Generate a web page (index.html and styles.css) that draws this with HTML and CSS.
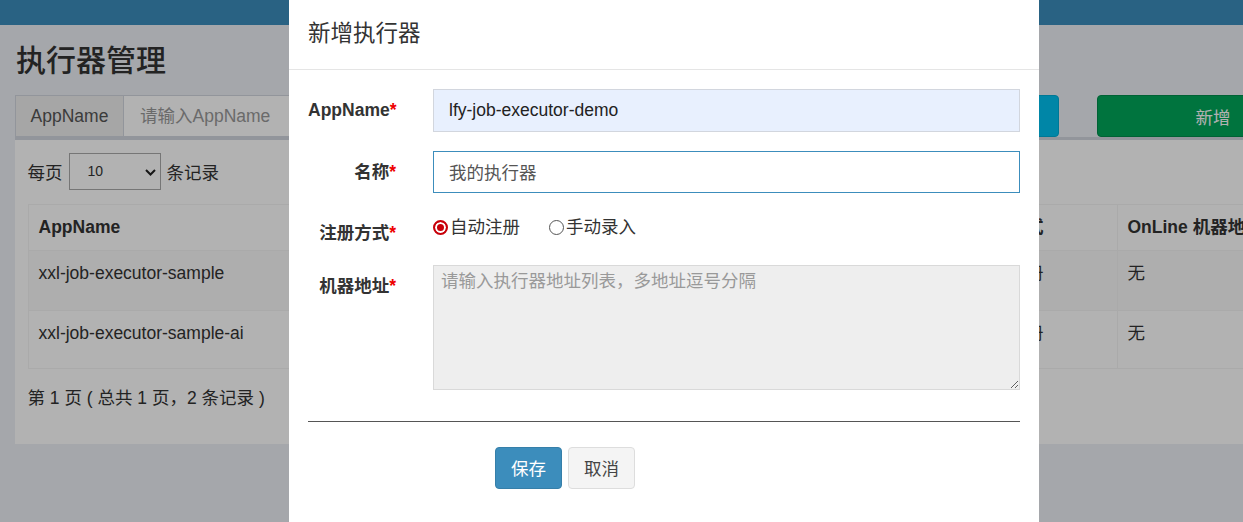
FILE: index.html
```html
<!DOCTYPE html>
<html lang="zh">
<head>
    <meta charset="UTF-8">
    <meta name="viewport" content="width=device-width, initial-scale=1.0">
    <title>执行器管理</title>
    <link rel="stylesheet" href="styles.css">
</head>
<body>
    <div class="page">
        <div class="topbar"></div>
        <div class="content">
            <h1>执行器管理</h1>

            <div class="toolbar">
                <div class="search">
                    <span class="addon">AppName</span>
                    <input type="text" placeholder="请输入AppName">
                </div>
                <button class="btn-search">搜索</button>
                <button class="btn-add">新增</button>
            </div>

            <div class="box">
                <div class="length">
                    每页
                    <span class="select-wrap">
                        <select><option>10</option></select>
                        <svg class="chevron" width="11" height="7" viewBox="0 0 11 7"><path d="M1 1l4.5 4.5L10 1" fill="none" stroke="#222" stroke-width="2"/></svg>
                    </span>
                    条记录
                </div>

                <table>
                    <colgroup>
                        <col style="width: 470px">
                        <col style="width: 465px">
                        <col style="width: 154px">
                        <col style="width: 260px">
                        <col>
                    </colgroup>
                    <thead>
                        <tr>
                            <th>AppName</th>
                            <th>名称</th>
                            <th>注册方式</th>
                            <th>OnLine 机器地址</th>
                            <th>操作</th>
                        </tr>
                    </thead>
                    <tbody>
                        <tr>
                            <td>xxl-job-executor-sample</td>
                            <td>示例执行器</td>
                            <td>自动注册</td>
                            <td>无</td>
                            <td>操作</td>
                        </tr>
                        <tr>
                            <td>xxl-job-executor-sample-ai</td>
                            <td>AI执行器Sample</td>
                            <td>自动注册</td>
                            <td>无</td>
                            <td>操作</td>
                        </tr>
                    </tbody>
                </table>

                <div class="info">第 1 页 ( 总共 1 页，2 条记录 )</div>
            </div>
        </div>
    </div>

    <div class="backdrop"></div>

    <div class="modal">
        <div class="modal-header">
            <h4>新增执行器</h4>
        </div>
        <div class="modal-body">
            <form>
                <div class="form-row">
                    <label>AppName<span class="req">*</span></label>
                    <input class="field autofill" type="text" value="lfy-job-executor-demo">
                </div>
                <div class="form-row">
                    <label>名称<span class="req">*</span></label>
                    <input class="field focused" type="text" value="我的执行器">
                </div>
                <div class="form-row">
                    <label>注册方式<span class="req">*</span></label>
                    <div class="radios">
                        <label class="radio"><input type="radio" name="addressType" checked>自动注册</label>
                        <label class="radio"><input type="radio" name="addressType">手动录入</label>
                    </div>
                </div>
                <div class="form-row">
                    <label>机器地址<span class="req">*</span></label>
                    <textarea class="area" readonly placeholder="请输入执行器地址列表，多地址逗号分隔"></textarea>
                </div>
                <hr>
                <div class="actions">
                    <button type="button" class="btn btn-primary">保存</button>
                    <button type="button" class="btn btn-default">取消</button>
                </div>
            </form>
        </div>
    </div>
</body>
</html>
```

FILE: styles.css
```css
body {
    margin: 0;
    font-family: "Liberation Sans", Arial, "Noto Sans CJK SC", sans-serif;
    font-size: 17.5px;
    color: #333;
    background-color: #ecf0f5;
    overflow: hidden;
}
.page {
    width: 1600px;
}
.topbar {
    height: 25px;
    background-color: #3c8dbc;
}
.content {
    padding: 0 15px;
}
h1 {
    margin: 0;
    padding: 19px 0 0 1px;
    font-size: 30px;
    line-height: 33px;
    font-weight: 500;
}
.toolbar {
    display: flex;
    margin-top: 18px;
    height: 42px;
}
.search {
    display: flex;
    width: 420px;
}
.addon {
    width: 109px;
    box-sizing: border-box;
    border: 1px solid #d2d6de;
    background-color: #eee;
    color: #555;
    text-align: center;
    line-height: 40px;
}
.search input {
    flex: 1;
    border: 1px solid #d2d6de;
    border-left: none;
    padding: 0 16px;
    font-family: inherit;
    font-size: 17.5px;
}
.search input::placeholder {
    color: #999;
}
.btn-search {
    width: 130px;
    margin-left: 494px;
    border: 1px solid #00acd6;
    border-radius: 4px;
    background-color: #00c0ef;
    color: #fff;
    font-family: inherit;
    font-size: 17.5px;
}
.btn-add {
    width: 232px;
    margin-left: 38px;
    border: 1px solid #008d4c;
    border-radius: 4px;
    background-color: #00a65a;
    color: #fff;
    font-family: inherit;
    font-size: 17.5px;
}
.box {
    border-top: 3px solid #d2d6de;
    background-color: #fff;
    padding: 12.5px 12.5px 33px;
}
.length {
    display: flex;
    align-items: center;
    gap: 6px;
    height: 37px;
}
.select-wrap {
    position: relative;
    display: inline-block;
}
.select-wrap select {
    -webkit-appearance: none;
    appearance: none;
    width: 92px;
    height: 37px;
    border: 1px solid #aaa;
    background-color: #fff;
    padding-left: 18px;
    font-family: inherit;
    font-size: 14px;
    color: #333;
}
.chevron {
    position: absolute;
    right: 5px;
    top: 16px;
}
table {
    width: 100%;
    margin-top: 14px;
    border-collapse: collapse;
    table-layout: fixed;
    border: 1px solid #f4f4f4;
}
th, td {
    padding: 10px;
    text-align: left;
    vertical-align: top;
    line-height: 25px;
    border: 1px solid #f4f4f4;
    white-space: nowrap;
    overflow: hidden;
}
th {
    font-weight: bold;
}
tbody td {
    height: 39px;
}
tbody tr:nth-child(2) td {
    height: 37px;
}
tbody tr:nth-child(odd) {
    background-color: #f9f9f9;
}
.info {
    margin-top: 17px;
    line-height: 25px;
}
.backdrop {
    position: fixed;
    left: 0;
    top: 0;
    right: 0;
    bottom: 0;
    background-color: rgba(0, 0, 0, 0.3);
}
.modal {
    position: absolute;
    top: 0;
    left: 289px;
    width: 750px;
    height: 600px;
    background-color: #fff;
}
.modal-header {
    padding: 18px 19px 19px;
    border-bottom: 1px solid #e5e5e5;
}
.modal-header h4 {
    margin: 0;
    font-size: 22.5px;
    line-height: 32px;
    font-weight: normal;
    color: #333;
}
.modal-body {
    padding: 19px 19px 0;
}
.form-row {
    display: grid;
    grid-template-columns: 88px 1fr;
    column-gap: 37px;
    margin-bottom: 19px;
}
.form-row > label {
    padding-top: 9px;
    line-height: 25px;
    text-align: right;
    font-weight: bold;
    white-space: nowrap;
}
.req {
    color: #e00;
}
.field {
    height: 42.5px;
    box-sizing: border-box;
    border: 1px solid #d2d6de;
    padding: 0 15px;
    font-family: inherit;
    font-size: 17.5px;
    outline: none;
}
.field.autofill {
    background-color: #e8f0fe;
    color: #222;
}
.field.focused {
    border-color: #3c8dbc;
    color: #555;
}
.radios {
    display: flex;
    margin-top: -4px;
    line-height: 25px;
}
.radio {
    display: inline-flex;
    align-items: center;
    gap: 2px;
    margin-right: 29px;
}
.radio input {
    -webkit-appearance: none;
    appearance: none;
    width: 15px;
    height: 15px;
    margin: 0;
    box-sizing: border-box;
    border: 1px solid #555;
    border-radius: 50%;
    background-color: #fff;
}
.radio input:checked {
    border: 2px solid #c8000a;
    background-color: #c8000a;
    box-shadow: inset 0 0 0 2px #fff;
}
.area {
    height: 125px;
    box-sizing: border-box;
    border: 1px solid #d9d9d9;
    background-color: #eee;
    padding: 3px 7px;
    font-family: inherit;
    font-size: 17.5px;
    line-height: 25px;
    outline: none;
}
.area::placeholder {
    color: #999;
}
hr {
    margin: 30.5px 0 25px;
    border: 0;
    border-top: 1px solid #555;
}
.actions {
    display: flex;
    gap: 6px;
    padding-left: 187px;
}
.btn {
    height: 42px;
    padding: 0 15px;
    font-family: inherit;
    font-size: 17.5px;
    border: 1px solid;
    border-radius: 4px;
    cursor: pointer;
}
.btn-primary {
    background-color: #3c8dbc;
    border-color: #367fa9;
    color: #fff;
}
.btn-default {
    background-color: #f4f4f4;
    border-color: #ddd;
    color: #444;
}
```
